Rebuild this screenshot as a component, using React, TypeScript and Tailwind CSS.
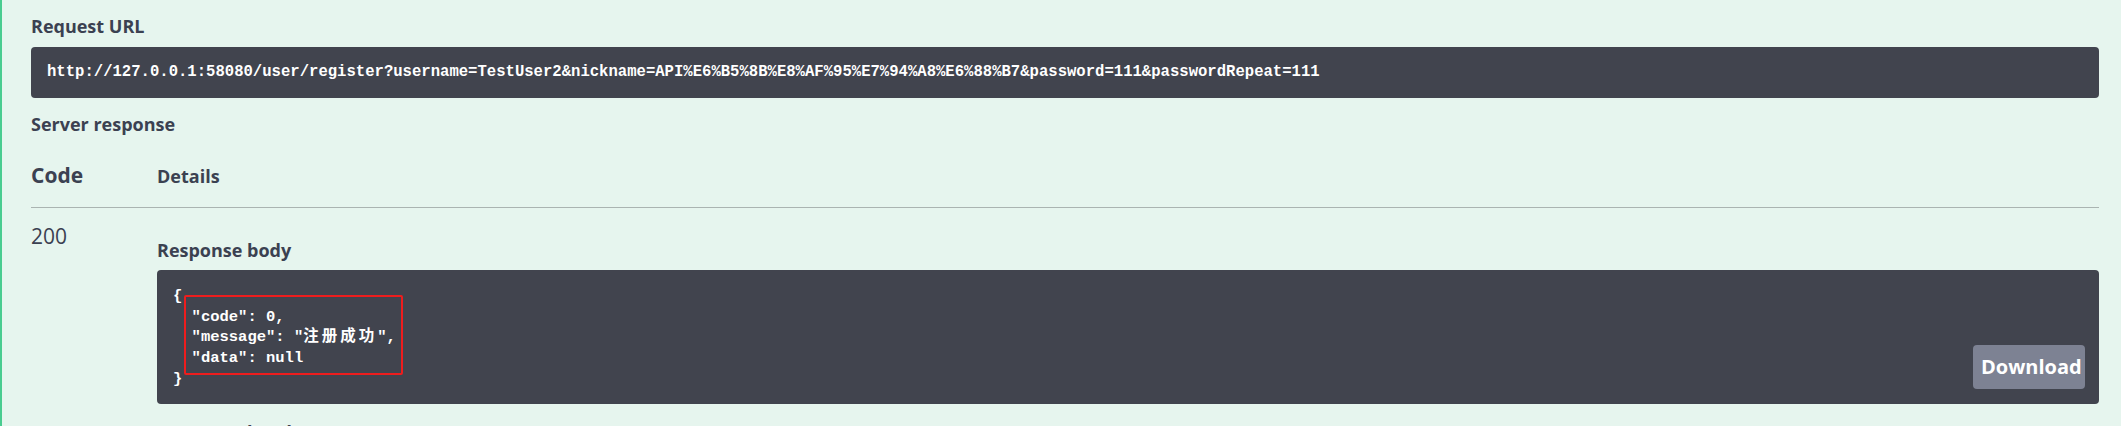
import React from "react";

const mono = "font-['Liberation_Mono','Noto_Sans_CJK_SC',monospace]";

export default function App() {
  const url =
    "http://127.0.0.1:58080/user/register?username=TestUser2&nickname=API%E6%B5%8B%E8%AF%95%E7%94%A8%E6%88%B7&password=111&passwordRepeat=111";
  return (
    <div className="h-[426px] w-full overflow-hidden bg-[#e6f5ee] border-l-2 border-[#49cc90] font-['Open_Sans','Noto_Sans',sans-serif] text-[#3b4151]">
      <div className="pl-[29px] pr-[22px] pt-[14px]">
        <h4 className="text-[18px] leading-[24px] font-bold">Request URL</h4>
        <div className="mt-[9px] h-[51px] rounded-[4px] bg-[#41444e] flex items-center px-[16px]">
          <span className={`${mono} text-[15.6px] font-bold text-white whitespace-nowrap`}>{url}</span>
        </div>
        <h4 className="mt-[14px] text-[18px] leading-[24px] font-bold">Server response</h4>

        <div className="mt-[25px] flex items-baseline pb-[18px] border-b border-[#aab4b1]">
          <div className="w-[126px] text-[21px] leading-[28px] font-bold">Code</div>
          <div className="text-[18px] leading-[24px] font-bold">Details</div>
        </div>

        <div className="flex pt-[14px]">
          <div className="w-[126px] shrink-0 text-[21px] leading-[28px]">200</div>
          <div className="flex-1 pt-[16px]">
            <h5 className="text-[18px] leading-[24px] font-bold">Response body</h5>
            <div className="relative mt-[8px] h-[134px] rounded-[4px] bg-[#41444e] px-[16px] pt-[16px]">
              <pre className={`${mono} text-[15.5px] leading-[20.7px] font-bold text-white`}>
                {"{\n"}
                {'  "code": 0,\n'}
                {'  "message": "'}
                <span className="tracking-[3px]">注册成功</span>
                {'",\n'}
                {'  "data": null\n'}
                {"}"}
              </pre>
              <div className="absolute left-[27px] top-[25px] w-[219px] h-[80px] border-2 border-[#ee1d1d] rounded-[2px]" />
              <button className="absolute right-[14px] bottom-[15px] w-[112px] h-[44px] rounded-[4px] bg-[#7d8293] text-white text-[20px] font-bold pl-[8px] text-left whitespace-nowrap overflow-visible">
                Download
              </button>
            </div>
            <h5 className="mt-[16px] text-[18px] leading-[24px] font-bold">Response headers</h5>
          </div>
        </div>
      </div>
    </div>
  );
}
